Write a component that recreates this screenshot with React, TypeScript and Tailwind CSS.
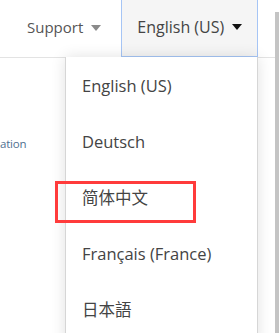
import React from "react";

const languages = [
  "English (US)",
  "Deutsch",
  "简体中文",
  "Français (France)",
  "日本語",
];

function Caret({ className }: { className: string }) {
  return (
    <span
      className={`inline-block w-0 h-0 border-l-[5px] border-r-[5px] border-t-[6px] border-l-transparent border-r-transparent ${className}`}
    />
  );
}

export default function App() {
  return (
    <div
      className="relative w-[279px] h-[333px] overflow-hidden bg-white text-[#444]"
      style={{ fontFamily: '"Open Sans", "Noto Sans CJK SC", sans-serif' }}
    >
      {/* Top nav */}
      <div className="flex h-[58px] border-b border-[#e3e3e3] pr-[21px]">
        <div className="flex items-center gap-[8px] pl-[27px] pr-[20px] pb-[3px] text-[15px] text-[#555]">
          <span>Support</span>
          <Caret className="border-t-[#8a8a8a] mt-[1px]" />
        </div>
        <div className="flex items-center gap-[8px] w-[138px] h-[57px] pl-[15px] pb-[3px] bg-[#f5f5f5] border-l border-r border-b border-[#a6c5f5] text-[16px] text-[#444]">
          <span>English (US)</span>
          <Caret className="border-t-[#111] mt-[1px]" />
        </div>
      </div>

      {/* Page content behind menu */}
      <div className="pt-[77px] pl-0 text-[11.5px] tracking-[-0.2px] text-[#4f6f8f]">ation</div>

      {/* Language menu */}
      <div className="absolute left-[65px] top-[57px] w-[193px] h-[290px] bg-white border-l border-r border-[#d6d6d6] shadow-[0_0_14px_rgba(0,0,0,0.12)] pt-[1px]">
        {languages.map((lang) => (
          <div
            key={lang}
            className="h-[56px] flex items-center pl-[16px] text-[16.5px] text-[#444]"
          >
            {lang}
          </div>
        ))}
      </div>

      {/* Highlight annotation */}
      <div className="absolute left-[55px] top-[181px] w-[141px] h-[42px] border-[3px] border-[#ff3b3b]" />

      {/* Scrollbar */}
      <div className="absolute right-0 top-[12px] bottom-0 w-[4px] bg-[#c4c4c4]" />
    </div>
  );
}
